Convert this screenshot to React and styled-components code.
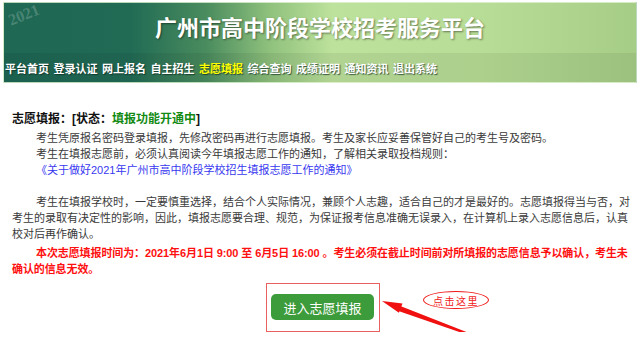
import styled, { createGlobalStyle } from "styled-components";

const GlobalStyle = createGlobalStyle`
  body {
    margin: 0;
    background: #fff;
    font-family: "Liberation Sans", "Noto Sans CJK SC", sans-serif;
  }
`;

const Header = styled.header`
  position: relative;
  margin: 2px 0 0 3px;
  width: 632px;
  height: 79px;
  border: 1px solid rgba(225, 242, 214, 0.8);
  background: linear-gradient(
    90deg,
    #1e6854 0%,
    #216b55 20%,
    #4a8c5e 32%,
    #8fc17d 42%,
    #bde29c 52%,
    #b8dd96 75%,
    #a6cd86 100%
  );
  display: flex;
  flex-direction: column;
  overflow: hidden;
`;

const Watermark = styled.span`
  position: absolute;
  left: 4px;
  top: 4px;
  font-family: "Liberation Serif", serif;
  font-weight: bold;
  font-size: 16px;
  line-height: 16px;
  color: rgba(255, 255, 255, 0.2);
  transform: rotate(-22deg);
`;

const Banner = styled.div`
  height: 50px;
  display: flex;
  align-items: center;
  justify-content: center;
  padding-bottom: 4px;
  box-sizing: border-box;
`;

const Title = styled.h1`
  margin: 0;
  font-size: 22px;
  font-weight: bold;
  color: #fff;
  text-shadow: 1px 1px 2px rgba(0, 0, 0, 0.45);
`;

const Nav = styled.nav`
  height: 29px;
  display: flex;
  align-items: center;
  gap: 4.5px;
  padding-left: 1px;
  background: rgba(0, 0, 0, 0.06);
`;

const NavItem = styled.a`
  font-size: 11px;
  font-weight: bold;
  color: ${(props) => (props.$active ? "#ffff00" : "#fff")};
  text-decoration: none;
  text-shadow: 1px 1px 1px rgba(10, 40, 30, 0.7);
`;

const Main = styled.main`
  padding: 0 7px 0 12px;
  margin-top: 26px;
`;

const Heading = styled.h2`
  margin: 0;
  font-size: 12px;
  line-height: 20px;
  font-weight: bold;
  color: #111;
`;

const Status = styled.span`
  color: #138a13;
`;

const Para = styled.p`
  margin: ${(props) => props.$top || "0"} 0 0 0;
  font-size: 11px;
  line-height: 16px;
  color: #3a3a3a;
  text-indent: 24px;
`;

const Line = styled.span`
  display: block;
`;

const Link = styled.a`
  color: #3838f0;
  text-decoration: none;
`;

const Notice = styled.p`
  margin: 3px 0 0 0;
  font-size: 11px;
  line-height: 16px;
  font-weight: bold;
  letter-spacing: -0.1px;
  color: #ff1010;
  text-indent: 24px;
`;

const ButtonRow = styled.div`
  position: relative;
  display: flex;
  justify-content: center;
  margin-top: 6px;
`;

const Highlight = styled.div`
  border: 1px solid #ea6060;
  padding: 10px 5px 11px 4px;
`;

const EnterButton = styled.button`
  display: block;
  width: 103px;
  height: 26px;
  border: none;
  border-radius: 5px;
  background: #3c9b3a;
  color: #fff;
  font-family: "Noto Sans CJK SC", sans-serif;
  font-size: 13px;
  cursor: pointer;
`;

const Arrow = styled.svg`
  position: absolute;
  left: 366px;
  top: 8px;
`;

const ClickHint = styled.span`
  position: absolute;
  left: 411px;
  top: 8px;
  width: 64px;
  height: 16px;
  border: 1px solid #f01818;
  border-radius: 50%;
  display: flex;
  align-items: center;
  justify-content: center;
  font-family: "Noto Sans CJK SC", serif;
  font-size: 10px;
  letter-spacing: 1.5px;
  color: #f01818;
`;

const navItems = [
  "平台首页",
  "登录认证",
  "网上报名",
  "自主招生",
  "志愿填报",
  "综合查询",
  "成绩证明",
  "通知资讯",
  "退出系统",
];

export default function App() {
  return (
    <>
      <GlobalStyle />
      <Header>
        <Watermark>2021</Watermark>
        <Banner>
          <Title>广州市高中阶段学校招考服务平台</Title>
        </Banner>
        <Nav>
          {navItems.map((item) => (
            <NavItem key={item} href="#" $active={item === "志愿填报"}>
              {item}
            </NavItem>
          ))}
        </Nav>
      </Header>
      <Main>
        <Heading>
          志愿填报：[状态：<Status>填报功能开通中</Status>]
        </Heading>
        <Para $top="1px">
          <Line>考生凭原报名密码登录填报，先修改密码再进行志愿填报。考生及家长应妥善保管好自己的考生号及密码。</Line>
          <Line>考生在填报志愿前，必须认真阅读今年填报志愿工作的通知，了解相关录取投档规则：</Line>
          <Line>
            <Link href="#">《关于做好2021年广州市高中阶段学校招生填报志愿工作的通知》</Link>
          </Line>
        </Para>
        <Para $top="16px">
          考生在填报学校时，一定要慎重选择，结合个人实际情况，兼顾个人志趣，适合自己的才是最好的。志愿填报得当与否，对考生的录取有决定性的影响，因此，填报志愿要合理、规范，为保证报考信息准确无误录入，在计算机上录入志愿信息后，认真校对后再作确认。
        </Para>
        <Notice>
          本次志愿填报时间为：2021年6月1日 9:00 至 6月5日 16:00 。考生必须在截止时间前对所填报的志愿信息予以确认，考生未确认的信息无效。
        </Notice>
        <ButtonRow>
          <Highlight>
            <EnterButton>进入志愿填报</EnterButton>
          </Highlight>
          <Arrow width="95" height="48" viewBox="0 0 95 48">
            <polygon points="4,10 24.5,12.4 20.9,21.8" fill="#f01010" />
            <polygon points="21,14.5 19,19.5 90,44 91,42" fill="#f01010" />
          </Arrow>
          <ClickHint>点击这里</ClickHint>
        </ButtonRow>
      </Main>
    </>
  );
}
